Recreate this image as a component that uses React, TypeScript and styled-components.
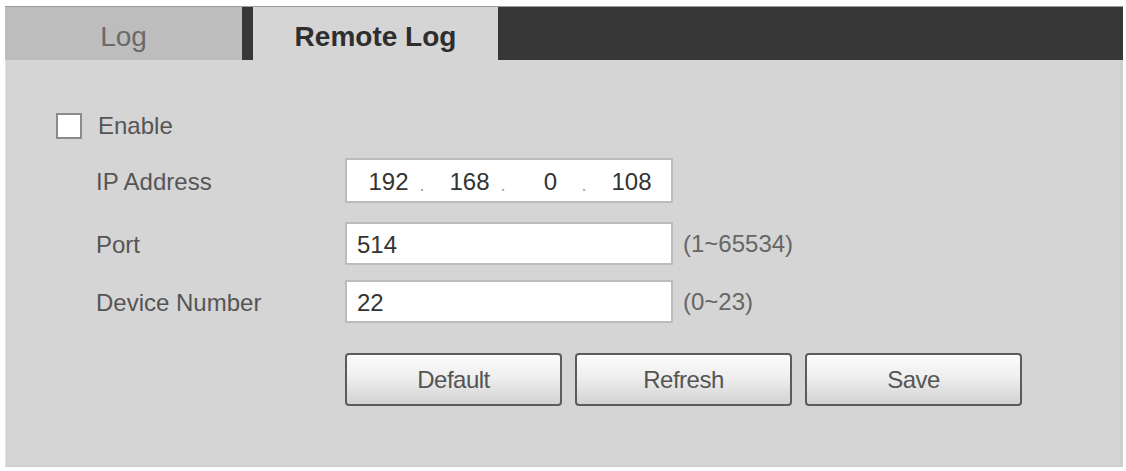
import React from "react";
import styled, { createGlobalStyle } from "styled-components";

const GlobalStyle = createGlobalStyle`
  * { box-sizing: border-box; }
  html, body { margin: 0; padding: 0; background: #ffffff; }
  body { font-family: "Liberation Sans", Arial, sans-serif; }
`;

const Page = styled.div`
  padding: 7px 3px 4px 5px;
  width: 1126px;
`;

const TabBar = styled.div`
  display: flex;
  gap: 11px;
  height: 53px;
  background: #373737;
  box-shadow: 0 -1px 0 #9a9a9a;
`;

const Tab = styled.div<{ $active?: boolean; $w: number }>`
  width: ${(p) => p.$w}px;
  display: flex;
  align-items: center;
  justify-content: center;
  padding-top: 6px;
  background: ${(p) => (p.$active ? "#d5d5d5" : "#bdbdbd")};
  color: ${(p) => (p.$active ? "#2e2e2e" : "#6a6a6a")};
  font-size: 28px;
  font-weight: ${(p) => (p.$active ? 700 : 400)};
`;

const Panel = styled.div`
  height: 407px;
  background: #d5d5d5;
  padding: 53px 0 0 51px;
  box-shadow: inset 1px 0 0 #e2e2e2, inset -3px 0 0 #cfcfcf, inset 0 -1px 0 #cbcbcb;
  color: #555;
  font-size: 24px;
`;

const CheckRow = styled.label`
  display: flex;
  align-items: center;
  gap: 16px;
  height: 26px;
`;

const CheckBox = styled.span`
  width: 26px;
  height: 26px;
  background: #fff;
  border: 2px solid #8c8c8c;
`;

const FieldRow = styled.div<{ $mt: number; $h: number }>`
  display: flex;
  align-items: center;
  margin: ${(p) => p.$mt}px 0 0 40px;
  height: ${(p) => p.$h}px;
`;

const Label = styled.span`
  width: 249px;
  color: #555;
  padding-top: 3px;
`;

const TextBox = styled.input`
  width: 328px;
  height: 100%;
  background: #fff;
  border: 2px solid #bcbcbc;
  padding: 2px 0 0 10px;
  font-family: inherit;
  font-size: 24px;
  color: #333;
  outline: none;
`;

const IpBox = styled.div`
  width: 328px;
  height: 100%;
  display: flex;
  background: #fff;
  border: 2px solid #bcbcbc;
`;

const IpSegment = styled.div`
  flex: 1;
  display: flex;
  align-items: center;
`;

const IpNumber = styled.span`
  flex: 1;
  text-align: center;
  padding: 2px 0 0 14px;
  color: #333;
  font-size: 24px;
`;

const IpDot = styled.span<{ $hidden?: boolean }>`
  width: 12px;
  text-align: center;
  color: #a8a8a8;
  font-size: 20px;
  padding-top: 8px;
  visibility: ${(p) => (p.$hidden ? "hidden" : "visible")};
`;

const Range = styled.span`
  margin-left: 10px;
  color: #666;
  font-size: 24px;
`;

const ButtonRow = styled.div`
  display: flex;
  gap: 13px;
  margin: 30px 0 0 289px;
`;

const Button = styled.button`
  width: 217px;
  height: 53px;
  border: 2px solid #5c5c5c;
  border-radius: 4px;
  background: linear-gradient(#fbfbfb 0%, #efefef 45%, #d2d2d2 100%);
  color: #555;
  font-family: inherit;
  font-size: 24px;
  letter-spacing: -0.5px;
  padding: 0;
  cursor: pointer;
  box-shadow: inset 0 1px 0 #ffffff;
`;

const ip = ["192", "168", "0", "108"];

export default function App() {
  return (
    <Page>
      <GlobalStyle />
      <TabBar>
        <Tab $w={237}>Log</Tab>
        <Tab $w={245} $active>
          Remote Log
        </Tab>
      </TabBar>
      <Panel>
        <CheckRow>
          <CheckBox />
          <span>Enable</span>
        </CheckRow>
        <FieldRow $mt={19} $h={45}>
          <Label>IP Address</Label>
          <IpBox>
            {ip.map((n, i) => (
              <IpSegment key={i}>
                <IpNumber>{n}</IpNumber>
                <IpDot $hidden={i === ip.length - 1}>.</IpDot>
              </IpSegment>
            ))}
          </IpBox>
        </FieldRow>
        <FieldRow $mt={19} $h={43}>
          <Label>Port</Label>
          <TextBox defaultValue="514" />
          <Range>(1~65534)</Range>
        </FieldRow>
        <FieldRow $mt={15} $h={43}>
          <Label>Device Number</Label>
          <TextBox defaultValue="22" />
          <Range>(0~23)</Range>
        </FieldRow>
        <ButtonRow>
          <Button>Default</Button>
          <Button>Refresh</Button>
          <Button>Save</Button>
        </ButtonRow>
      </Panel>
    </Page>
  );
}
